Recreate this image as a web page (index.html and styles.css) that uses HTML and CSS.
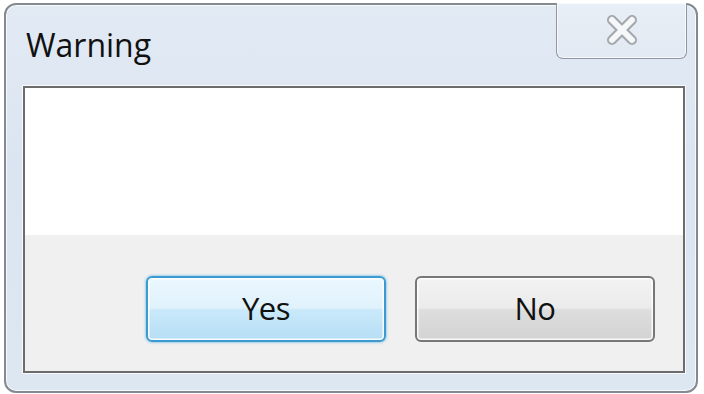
FILE: index.html
```html
<!DOCTYPE html>
<html>
<head>
<meta charset="utf-8">
<link rel="stylesheet" href="styles.css">
</head>
<body>
<div class="window">
  <div class="titlebar">
    <div class="title">Warning</div>
    <div class="close">
      <svg width="36" height="32" viewBox="0 0 36 32">
        <path d="M8 6 L28 26 M28 6 L8 26" stroke="#a3a8ae" stroke-width="10" stroke-linecap="round" fill="none"/>
        <path d="M8 6 L28 26 M28 6 L8 26" stroke="#f5f7f9" stroke-width="6" stroke-linecap="round" fill="none"/>
      </svg>
    </div>
  </div>
  <div class="client">
    <div class="message"></div>
    <div class="actions">
      <button class="btn btn-default">Yes</button>
      <button class="btn">No</button>
    </div>
  </div>
</div>
</body>
</html>
```

FILE: styles.css
```css
html, body {
  margin: 0;
  padding: 0;
  background: #ffffff;
}
body {
  padding: 3px 0 0 4px;
  font-family: "Open Sans", "Noto Sans", sans-serif;
}
.window {
  box-sizing: border-box;
  width: 694px;
  height: 390px;
  border: 2px solid #858a90;
  border-radius: 12px;
  background: linear-gradient(180deg, #e2eaf4 0%, #dbe5f1 40%, #dde7f2 100%);
  box-shadow: inset 0 0 0 1px rgba(255,255,255,0.75);
  display: flex;
  flex-direction: column;
}
.titlebar {
  height: 81px;
  display: flex;
  justify-content: space-between;
  align-items: flex-start;
  flex: none;
}
.title {
  padding: 23px 0 0 20px;
  font-size: 32px;
  line-height: 34px;
  color: #111111;
}
.close {
  box-sizing: border-box;
  width: 131px;
  height: 56px;
  margin: -2px 9px 0 0;
  border: 1.5px solid #8d96a2;
  border-top: none;
  border-radius: 0 0 7px 7px;
  background: linear-gradient(180deg, #e9eff6 0%, #e2e9f2 100%);
  box-shadow: inset 0 0 0 1px rgba(255,255,255,0.7);
  display: flex;
  align-items: center;
  justify-content: center;
  padding-bottom: 2px;
}
.close svg {
  display: block;
}
.client {
  flex: 1;
  margin: 0 11px 18px 17px;
  border: 2px solid #6c6c6c;
  box-shadow: 0 0 0 1px rgba(255,255,255,0.8);
  background: #f0f0f0;
  display: flex;
  flex-direction: column;
}
.message {
  height: 147px;
  background: #ffffff;
  flex: none;
}
.actions {
  flex: 1;
  display: flex;
  justify-content: flex-end;
  gap: 29px;
  padding: 41px 28px 29px 0;
}
.btn {
  box-sizing: border-box;
  width: 240px;
  height: 66px;
  border: 2px solid #777777;
  border-radius: 6px;
  background: linear-gradient(180deg, #f3f3f3 0%, #ebebeb 48%, #dddddd 52%, #d3d3d3 100%);
  box-shadow: inset 0 0 0 1.5px rgba(255,255,255,0.85);
  font-family: "Open Sans", "Noto Sans", sans-serif;
  font-size: 31px;
  color: #111111;
  padding: 0 0 2px 0;
  letter-spacing: -0.5px;
}
.btn-default {
  border: 2px solid #3b9bd0;
  background: linear-gradient(180deg, #eaf7fe 0%, #e0f2fc 48%, #c9e9fa 52%, #b6def5 100%);
  box-shadow: inset 0 0 0 1.5px rgba(255,255,255,0.9), 0 0 2px 1px rgba(90,180,230,0.5);
}
```
